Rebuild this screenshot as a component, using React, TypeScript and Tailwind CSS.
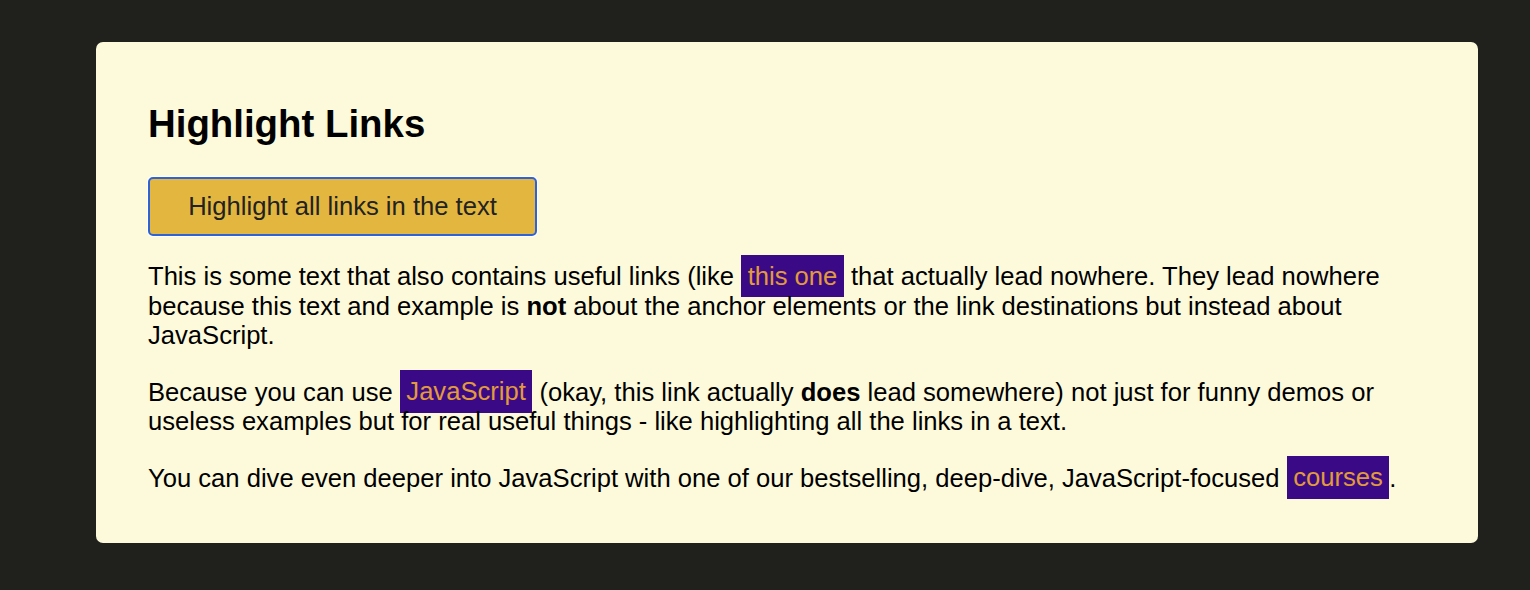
import { useState } from 'react'

function Hl({ children, href = '#', on }: { children: string; href?: string; on: boolean }) {
  return (
    <a
      href={href}
      className={on ? 'bg-[#3a0a86] text-[#e29a3c] px-[6.5px] py-[7.4px] no-underline' : 'text-[#3a0a86] underline'}
    >
      {children}
    </a>
  )
}

export default function App() {
  const [on, setOn] = useState(true)

  return (
    <div className="min-h-[590px] bg-[#20201d] pt-[42px] pb-[47px] pl-[96px] font-['Liberation_Sans',Arial,sans-serif]">
      <div className="w-[1382px] rounded-[7px] bg-[#fdfadc] px-[52px] pt-[60px] pb-[50px] text-black">
        <h1 className="text-[38.4px] font-bold leading-[44px] mb-[31px]">Highlight Links</h1>
        <button
          onClick={() => setOn((v) => !v)}
          className="h-[59px] w-[389px] rounded-[5px] border-2 border-[#2e62d9] bg-[#e3b73f] text-[25.6px] text-[#222] shadow-[0_0_0_1px_#ffffff]"
        >
          Highlight all links in the text
        </button>
        <div className="text-[25.6px] leading-[29.5px]">
          <p className="mt-[26px] mb-[27px]">
            This is some text that also contains useful links (like <Hl on={on}>this one</Hl> that actually lead
            nowhere. They lead nowhere because this text and example is <b>not</b> about the anchor elements or the
            link destinations but instead about JavaScript.
          </p>
          <p className="mb-[27px]">
            Because you can use <Hl on={on}>JavaScript</Hl> (okay, this link actually <b>does</b> lead somewhere) not
            just for funny demos or useless examples but for real useful things - like highlighting all the links in a
            text.
          </p>
          <p>
            You can dive even deeper into JavaScript with one of our bestselling, deep-dive, JavaScript-focused{' '}
            <Hl on={on}>courses</Hl>.
          </p>
        </div>
      </div>
    </div>
  )
}
